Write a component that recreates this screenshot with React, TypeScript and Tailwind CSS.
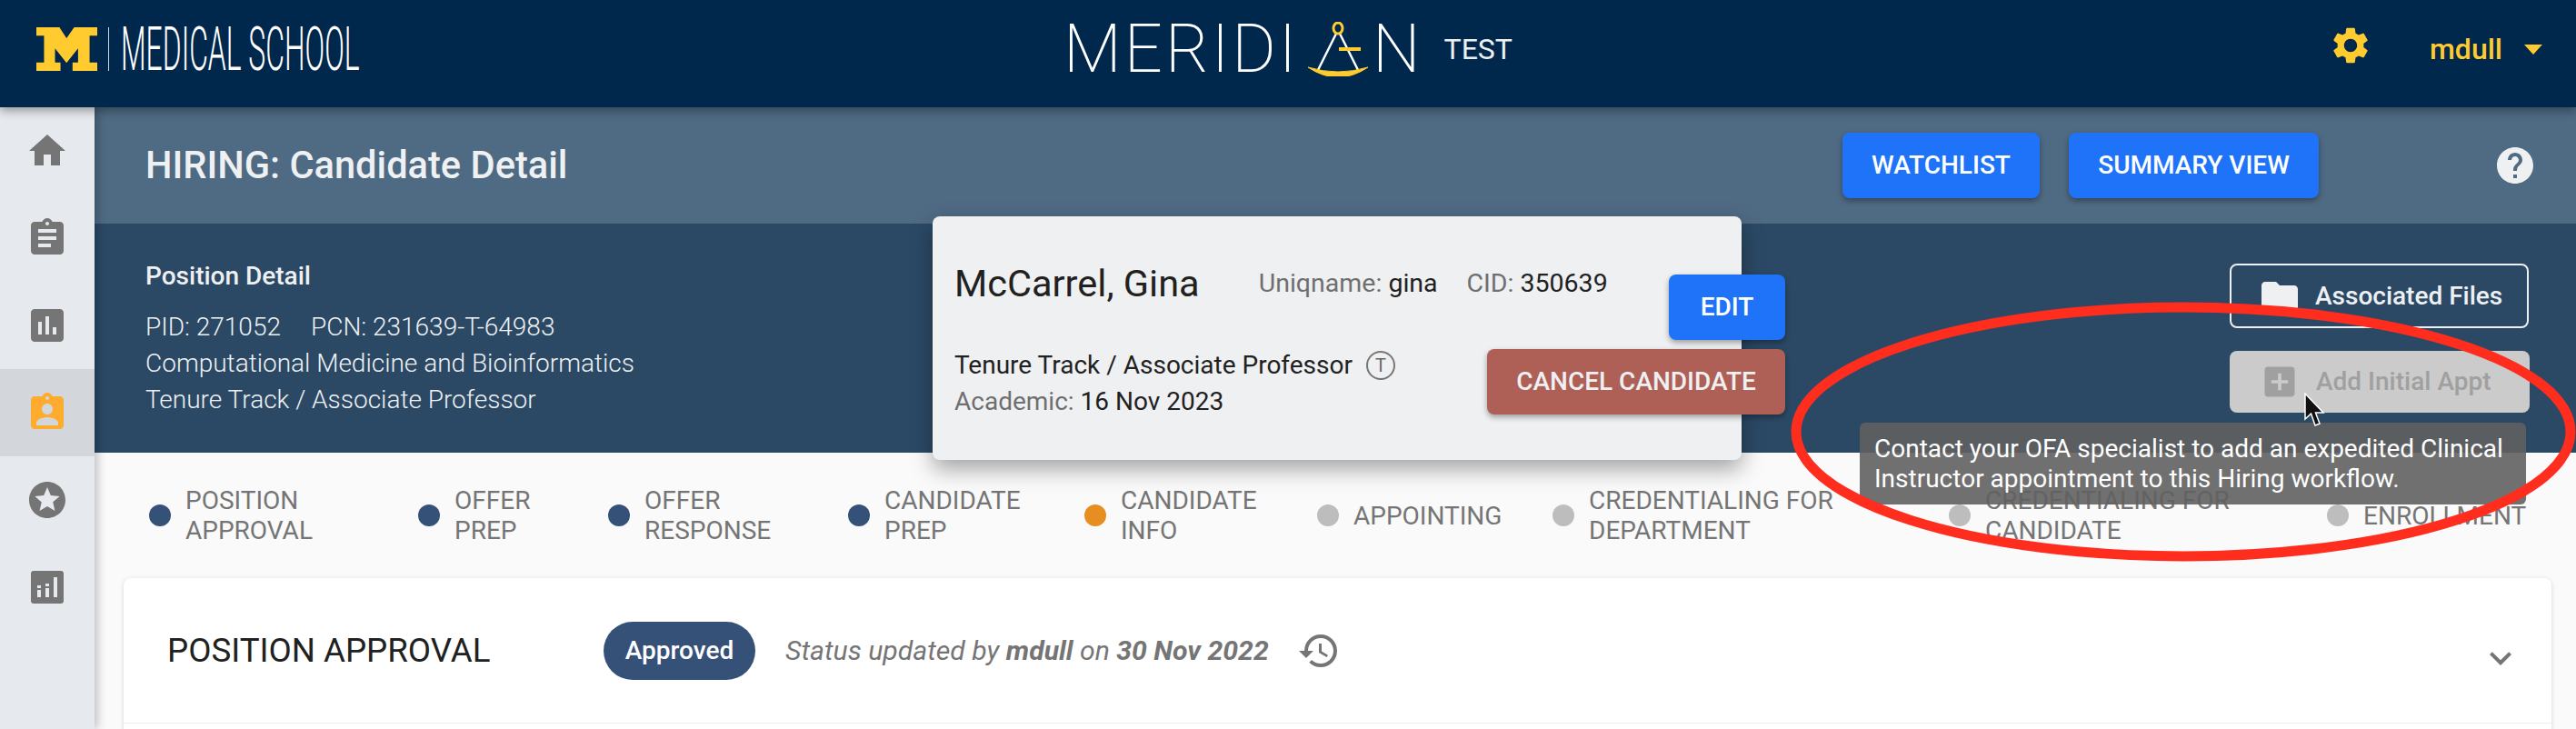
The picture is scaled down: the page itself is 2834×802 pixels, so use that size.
import { MdHome, MdAssignment, MdAssessment, MdAssignmentInd, MdStars, MdSettings, MdHelp, MdFolder, MdHistory, MdExpandMore, MdAddBox } from 'react-icons/md'

const steps = [
  { top: 'POSITION', bottom: 'APPROVAL', dot: 'bg-[#365177]' },
  { top: 'OFFER', bottom: 'PREP', dot: 'bg-[#365177]' },
  { top: 'OFFER', bottom: 'RESPONSE', dot: 'bg-[#365177]' },
  { top: 'CANDIDATE', bottom: 'PREP', dot: 'bg-[#365177]' },
  { top: 'CANDIDATE', bottom: 'INFO', dot: 'bg-[#e68e1f]' },
  { top: 'APPOINTING', dot: 'bg-[#bdbdbd]' },
  { top: 'CREDENTIALING FOR', bottom: 'DEPARTMENT', dot: 'bg-[#bdbdbd]' },
  { top: 'CREDENTIALING FOR', bottom: 'CANDIDATE', dot: 'bg-[#bdbdbd]' },
  { top: 'ENROLLMENT', dot: 'bg-[#bdbdbd]' },
]

function BlockM() {
  return (
    <svg width="67" height="48" viewBox="0 0 111 144" preserveAspectRatio="none">
      <polygon
        fill="#ffcb2f"
        points="0,0 42,0 55,36 69,0 111,0 111,28 97,28 97,116 111,116 111,144 66,144 66,116 76,116 76,70 55,118 34,70 34,116 44,116 44,144 0,144 0,116 14,116 14,28 0,28"
      />
    </svg>
  )
}

function Compass() {
  return (
    <svg width="66" height="60" viewBox="0 0 66 60" className="ml-[10px] mr-[5px]">
      <path d="M31 13 L11 53 M35 13 L55 53" stroke="#fff" strokeWidth="2.5" fill="none" />
      <ellipse cx="33" cy="7" rx="5" ry="6" stroke="#ffcb2f" strokeWidth="3" fill="none" />
      <rect x="34" y="28" width="24" height="4" fill="#ffcb2f" />
      <path d="M0 50 Q33 72 66 50 Q33 60 0 50 Z" fill="#ffcb2f" stroke="#ffcb2f" strokeWidth="1" />
    </svg>
  )
}

function LastNavIcon() {
  return (
    <svg width="48" height="48" viewBox="0 0 48 48">
      <rect x="6" y="6" width="36" height="36" rx="3" fill="#757575" />
      <rect x="13" y="27" width="4" height="8" fill="#e6e9ee" />
      <rect x="13" y="22" width="4" height="3" fill="#e6e9ee" />
      <rect x="22" y="25" width="4" height="10" fill="#e6e9ee" />
      <rect x="22" y="20" width="4" height="3" fill="#e6e9ee" />
      <rect x="31" y="13" width="4" height="22" fill="#e6e9ee" />
    </svg>
  )
}

function Sidebar() {
  return (
    <div className="relative z-10 w-[104px] shrink-0 bg-[#e6e9ee] shadow-[3px_0_10px_rgba(0,0,0,0.25)]">
      <div className="flex h-[96px] items-center justify-center text-[#757575]"><MdHome size={48} /></div>
      <div className="flex h-[96px] items-center justify-center text-[#757575]"><MdAssignment size={48} /></div>
      <div className="flex h-[96px] items-center justify-center text-[#757575]"><MdAssessment size={48} /></div>
      <div className="flex h-[96px] items-center justify-center bg-[#d3d6db] text-[#ffab2e]"><MdAssignmentInd size={48} /></div>
      <div className="flex h-[96px] items-center justify-center text-[#757575]"><MdStars size={48} /></div>
      <div className="flex h-[96px] items-center justify-center"><LastNavIcon /></div>
    </div>
  )
}

function CandidateCard() {
  return (
    <div className="absolute left-[922px] top-[120px] z-10 flex h-[268px] w-[890px] rounded-lg bg-[#eff0f2] pl-[24px] shadow-[0_10px_24px_rgba(0,0,0,0.35)]">
      <div className="w-0 flex-1 whitespace-nowrap pt-[50px]">
        <div className="flex items-center">
          <span className="text-[41.5px] leading-[48px] text-[#212121]">McCarrel, Gina</span>
          <span className="ml-[65px] text-[28.5px] text-[#6f6f6f]">Uniqname: <span className="text-[#212121]">gina</span></span>
          <span className="ml-[32px] text-[28.5px] text-[#6f6f6f]">CID: <span className="text-[#212121]">350639</span></span>
        </div>
        <div className="mt-[46px] flex items-center text-[28px] leading-[40px] text-[#212121]">
          Tenure Track / Associate Professor
          <span className="ml-[15px] flex h-[32px] w-[32px] items-center justify-center rounded-full border-2 border-[#777] text-[20px] text-[#666]">T</span>
        </div>
        <div className="text-[28px] leading-[40px] text-[#6f6f6f]">Academic: <span className="text-[#212121]">16 Nov 2023</span></div>
      </div>
      <div className="mr-[-48px] flex shrink-0 flex-col items-end gap-[10px] pt-[64px]">
        <button className="h-[72px] w-[128px] rounded-lg bg-[#1e73f8] text-[28px] font-medium text-white shadow-[0_3px_6px_rgba(0,0,0,0.35)]">EDIT</button>
        <button className="h-[72px] w-[328px] rounded-lg bg-[#ae5f56] text-[28px] font-medium text-[#eff0f2] shadow-[0_3px_6px_rgba(0,0,0,0.35)]">CANCEL CANDIDATE</button>
      </div>
    </div>
  )
}

function Overlays() {
  return (
    <>
      <div className="absolute left-[2046px] top-[465px] z-30 h-[90px] w-[733px] rounded-md bg-[rgba(97,97,97,0.9)] px-[16px] pt-[12px] text-[28px] leading-[33px] text-white">
        Contact your OFA specialist to add an expedited Clinical Instructor appointment to this Hiring workflow.
      </div>
      <svg className="absolute left-[1960px] top-[320px] z-40" width="874" height="310" viewBox="0 0 874 310">
        <ellipse cx="442" cy="155" rx="426" ry="137" fill="none" stroke="#ff2d1e" strokeWidth="11" />
      </svg>
      <svg className="absolute left-[2534px] top-[432px] z-50" width="24" height="38" viewBox="0 0 24 38">
        <path d="M2 1 L2 29 L8.5 23 L13 36 L18 34 L13.5 22 L22 22 Z" fill="#111" stroke="#fff" strokeWidth="1.5" />
      </svg>
    </>
  )
}

export default function App() {
  return (
    <div className="relative h-[802px] w-[2834px] overflow-hidden bg-[#fafafa] font-['Roboto',sans-serif]">
      {/* Top bar */}
      <div className="relative z-20 grid h-[118px] grid-cols-3 items-center bg-[#00274c] pb-[10px] shadow-[0_4px_10px_rgba(0,0,0,0.35)]">
        <div className="flex items-center pl-[40px]">
          <BlockM />
          <div className="ml-[12px] h-[48px] w-[1px] bg-[#cfd6dd]" />
          <div className="ml-[13px] w-[262px]">
            <div className="origin-left scale-x-[0.476] whitespace-nowrap text-[67px] font-light leading-[48px] text-white">MEDICAL SCHOOL</div>
          </div>
        </div>
        <div className="flex items-center justify-center">
          <span className="text-[74px] font-extralight leading-[74px] tracking-[3px] text-white">MERIDI</span>
          <Compass />
          <span className="text-[74px] font-extralight leading-[74px] text-white">N</span>
          <span className="ml-[26px] text-[32px] text-[#eef0f2]">TEST</span>
        </div>
        <div className="flex items-center justify-end pr-[37px] text-[#ffcb2f]">
          <MdSettings size={48} className="mt-[-8px]" />
          <span className="ml-[63px] text-[32px] font-medium">mdull</span>
          <span className="ml-[24px] h-0 w-0 border-x-[10px] border-t-[11px] border-x-transparent border-t-[#ffcb2f]" />
        </div>
      </div>

      <div className="flex h-[684px]">
        <Sidebar />
        <div className="relative flex-1">
          {/* Title bar */}
          <div className="flex h-[128px] items-center bg-[#4f6a83] pl-[56px] pr-[43px]">
            <span className="text-[41.6px] font-medium text-[#eef0f2]">HIRING: Candidate Detail</span>
            <button className="ml-auto h-[72px] w-[217px] rounded-lg bg-[#1e73f8] text-[28px] font-medium text-white shadow-[0_3px_6px_rgba(0,0,0,0.35)]">WATCHLIST</button>
            <button className="ml-[32px] h-[72px] w-[275px] rounded-lg bg-[#1e73f8] text-[28px] font-medium text-white shadow-[0_3px_6px_rgba(0,0,0,0.35)]">SUMMARY VIEW</button>
            <MdHelp size={48} className="ml-[192px] text-[#eef0f2]" />
          </div>

          {/* Position band */}
          <div className="relative flex h-[252px] justify-between bg-[#2b4965] pl-[56px] pr-[51px] pt-[44px] text-[#eef0f2]">
            <div>
              <div className="mt-[1px] text-[28px] font-medium leading-[26px]">Position Detail</div>
              <div className="mt-[23px] text-[28px] font-light leading-[40px]">
                <div className="flex gap-[33px]"><span>PID: 271052</span><span>PCN: 231639-T-64983</span></div>
                <div>Computational Medicine and Bioinformatics</div>
                <div>Tenure Track / Associate Professor</div>
              </div>
            </div>
            <div className="flex flex-col gap-[25px]">
              <div className="flex h-[71px] w-[329px] items-center rounded-lg border-2 border-[#eef0f2] pl-[29px] text-[28px] font-medium">
                <MdFolder size={48} />
                <span className="ml-[15px]">Associated Files</span>
              </div>
              <div className="flex h-[68px] w-[330px] items-center rounded-lg bg-[#cbcbcb] pl-[33px] text-[28px] font-medium text-[#a0a0a0]">
                <MdAddBox size={44} />
                <span className="ml-[18px]">Add Initial Appt</span>
              </div>
            </div>
          </div>
          <CandidateCard />

          {/* Steps */}
          <div className="grid grid-cols-[296px_209px_264px_260px_256px_259px_436px_416px_220px] items-center pl-[60px] pt-[36px] text-[28px] leading-[33px] text-[#757575]">
            {steps.map((s, i) => (
              <div key={i} className="flex h-[66px] items-center">
                <div className={`h-[24px] w-[24px] shrink-0 rounded-full ${s.dot}`} />
                <div className="ml-[16px]">
                  <div>{s.top}</div>
                  {s.bottom && <div>{s.bottom}</div>}
                </div>
              </div>
            ))}
          </div>

          {/* Accordion card */}
          <div className="ml-[32px] mr-[27px] mt-[36px] h-[180px] rounded-t-lg bg-white shadow-[0_1px_5px_rgba(0,0,0,0.15)]">
            <div className="flex h-[160px] items-center border-b border-[#eeeeee] pl-[48px] pr-[32px]">
              <span className="w-[480px] text-[36.7px] text-[#212121]">POSITION APPROVAL</span>
              <span className="flex h-[64px] w-[167px] items-center justify-center rounded-full bg-[#365177] text-[28px] font-medium text-white">Approved</span>
              <span className="ml-[33px] text-[30.2px] italic text-[#757575]">Status updated by <b>mdull</b> on <b>30 Nov 2022</b></span>
              <MdHistory size={48} className="ml-[31px] text-[#757575]" />
              <MdExpandMore size={48} className="ml-auto mt-[16px] text-[#757575]" />
            </div>
          </div>
        </div>
      </div>
      <Overlays />
    </div>
  )
}
